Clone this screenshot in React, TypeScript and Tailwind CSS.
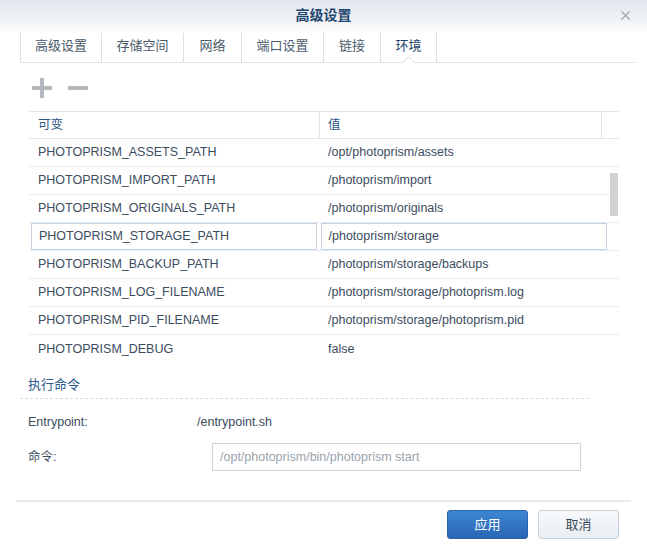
import { X } from 'lucide-react';

const tabs: [string, string][] = [
  ['高级设置', 'w-[81px]'],
  ['存储空间', 'w-[82px]'],
  ['网络', 'w-[58px]'],
  ['端口设置', 'w-[82px]'],
  ['链接', 'w-[57px]'],
  ['环境', 'w-[57px]'],
];

const rows: [string, string][] = [
  ['PHOTOPRISM_ASSETS_PATH', '/opt/photoprism/assets'],
  ['PHOTOPRISM_IMPORT_PATH', '/photoprism/import'],
  ['PHOTOPRISM_ORIGINALS_PATH', '/photoprism/originals'],
  ['PHOTOPRISM_STORAGE_PATH', '/photoprism/storage'],
  ['PHOTOPRISM_BACKUP_PATH', '/photoprism/storage/backups'],
  ['PHOTOPRISM_LOG_FILENAME', '/photoprism/storage/photoprism.log'],
  ['PHOTOPRISM_PID_FILENAME', '/photoprism/storage/photoprism.pid'],
  ['PHOTOPRISM_DEBUG', 'false'],
];

const font = "font-['Liberation_Sans','Noto_Sans_CJK_SC',sans-serif]";

export default function App() {
  return (
    <div className={`flex h-[545px] w-[647px] flex-col bg-white text-[12.5px] text-[#3b4c5e] ${font}`}>
      {/* title bar */}
      <div className="relative flex h-[31px] shrink-0 items-center justify-center bg-gradient-to-b from-[#e2e7ee] to-[#f9fafb]">
        <span className="text-[14px] font-bold text-[#1f466f]">高级设置</span>
        <X className="absolute right-[14px] top-[8px] h-[15px] w-[15px] text-[#a3aab2]" strokeWidth={2} />
      </div>

      {/* tabs */}
      <div className="relative ml-[20px] mr-[12px] flex h-[32px] shrink-0 items-stretch border-b border-[#dde3e9] pt-[2px]">
        {tabs.map(([t, w], i) => (
          <div
            key={t}
            className={`flex ${w} items-center justify-center border-l border-[#d9e0e7] pb-[4px] text-[13px] ${
              i === tabs.length - 1 ? 'border-r text-[#1e4470]' : 'text-[#4b5b6b]'
            }`}
          >
            {t}
          </div>
        ))}
        <div className="absolute bottom-[-5px] left-[384px] h-[9px] w-[9px] rotate-45 border-l border-t border-[#dde3e9] bg-white" />
      </div>

      {/* toolbar */}
      <div className="flex h-[48px] shrink-0 items-center gap-[16px] pl-[32px] pt-[2px]">
        <svg width="20" height="20" viewBox="0 0 20 20">
          <rect x="0" y="8" width="20" height="4" fill="#b4b9bf" />
          <rect x="8" y="0" width="4" height="20" fill="#b4b9bf" />
        </svg>
        <svg width="20" height="20" viewBox="0 0 20 20">
          <rect x="0" y="8" width="20" height="4" fill="#b4b9bf" />
        </svg>
      </div>

      {/* table */}
      <div className="ml-[29px] mr-[28px] shrink-0">
        <div className="flex h-[28px] border-y border-[#dfe6ed] text-[#2d5685]">
          <div className="flex w-[291px] items-center border-r border-[#dfe6ed] pl-[9px]">可变</div>
          <div className="flex w-[282px] items-center border-r border-[#dfe6ed] pl-[8px]">值</div>
          <div className="flex-1" />
        </div>
        <div className="relative">
          {rows.map(([k, v], i) =>
            i === 3 ? (
              <div key={k} className="flex h-[28px] items-center gap-[4px] border-b border-[#e6ecf2] pl-[2px] pr-[12px]">
                <div className="flex h-[27px] w-[286px] items-center border border-[#c6d2df] pl-[7px]">{k}</div>
                <div className="flex h-[27px] w-[287px] items-center border border-[#c6d2df] pl-[7px]">{v}</div>
              </div>
            ) : (
              <div key={k} className={`flex h-[28px] items-center pr-[10px] ${i < rows.length - 1 ? 'border-b border-[#e6ecf2]' : ''}`}>
                <div className="w-[291px] pl-[9px]">{k}</div>
                <div className="pl-[8px]">{v}</div>
              </div>
            )
          )}
          <div className="absolute right-[1px] top-[34px] h-[43px] w-[8px] bg-[#d2d2d2]" />
        </div>
      </div>

      {/* exec section */}
      <div className="ml-[20px] mr-[58px] mt-[12px] shrink-0 border-b border-dashed border-[#d5dde6] pb-[3px] pl-[8px] text-[13px] text-[#2c5a8c]">
        执行命令
      </div>
      <div className="mt-[14px] flex shrink-0 items-center px-[28px]">
        <div className="w-[169px]">Entrypoint:</div>
        <div>/entrypoint.sh</div>
      </div>
      <div className="mt-[12px] flex shrink-0 items-center px-[28px]">
        <div className="w-[184px]">命令:</div>
        <div className="flex h-[28px] w-[369px] items-center border border-[#cdd6e0] pl-[7px] text-[#9aa3ad]">
          /opt/photoprism/bin/photoprism start
        </div>
      </div>

      {/* footer */}
      <div className="mx-[16px] mt-[29px] flex shrink-0 justify-end gap-[10px] border-t-2 border-[#e9ecef] pr-[12px] pt-[8px]">
        <button className="h-[29px] w-[81px] rounded-[3px] border border-[#2a63a8] bg-gradient-to-b from-[#3e86d2] to-[#2866b5] text-[13px] text-white">
          应用
        </button>
        <button className="h-[29px] w-[81px] rounded-[3px] border border-[#c9d1da] bg-gradient-to-b from-[#f7f9fb] to-[#e9eef3] text-[13px] text-[#3b4a5a]">
          取消
        </button>
      </div>
    </div>
  );
}
